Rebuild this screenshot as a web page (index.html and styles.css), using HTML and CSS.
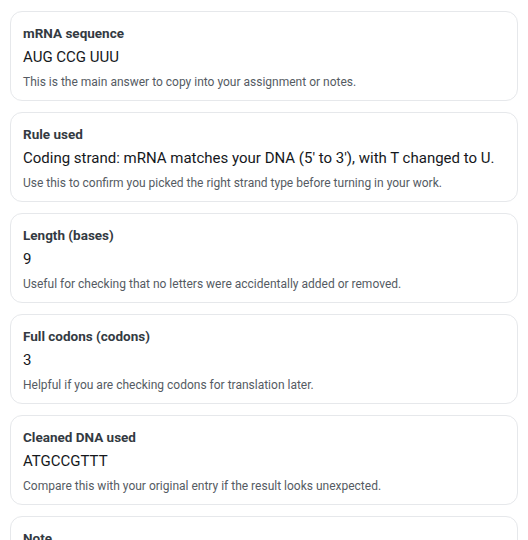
FILE: index.html
```html
<!DOCTYPE html>
<html lang="en">
  <head>
    <meta charset="UTF-8" />
    <meta name="viewport" content="width=device-width, initial-scale=1.0" />
    <title>mRNA Result</title>
    <link rel="stylesheet" href="styles.css">
  </head>
  <body>
    <div class="results">
      <div class="card">
        <div class="card-title">mRNA sequence</div>
        <div class="card-value">AUG CCG UUU</div>
        <div class="card-help">This is the main answer to copy into your assignment or notes.</div>
      </div>
      <div class="card">
        <div class="card-title">Rule used</div>
        <div class="card-value">Coding strand: mRNA matches your DNA (5' to 3'), with T changed to U.</div>
        <div class="card-help">Use this to confirm you picked the right strand type before turning in your work.</div>
      </div>
      <div class="card">
        <div class="card-title">Length (bases)</div>
        <div class="card-value">9</div>
        <div class="card-help">Useful for checking that no letters were accidentally added or removed.</div>
      </div>
      <div class="card">
        <div class="card-title">Full codons (codons)</div>
        <div class="card-value">3</div>
        <div class="card-help">Helpful if you are checking codons for translation later.</div>
      </div>
      <div class="card">
        <div class="card-title">Cleaned DNA used</div>
        <div class="card-value">ATGCCGTTT</div>
        <div class="card-help">Compare this with your original entry if the result looks unexpected.</div>
      </div>
      <div class="card">
        <div class="card-title">Note</div>
        <div class="card-value">Sequence length is a multiple of 3.</div>
        <div class="card-help">No leftover bases at the end of the sequence.</div>
      </div>
    </div>
  </body>
</html>
```
FILE: styles.css
```css
body {
  margin: 0;
  padding: 11px 10px;
  background-color: #ffffff;
  font-family: Roboto, "Open Sans", sans-serif;
}

.results {
  display: flex;
  flex-direction: column;
  gap: 11px;
}

.card {
  border: 1px solid #e6e8eb;
  border-radius: 12px;
  padding: 12px 12px 10px;
  background-color: #ffffff;
}

.card-title {
  font-size: 13.5px;
  line-height: 18px;
  font-weight: 700;
  color: #333a42;
}

.card-value {
  margin-top: 4px;
  font-size: 15px;
  line-height: 22px;
  color: #15181c;
}

.card-help {
  margin-top: 6px;
  font-size: 12px;
  line-height: 16px;
  color: #555b63;
}
```
